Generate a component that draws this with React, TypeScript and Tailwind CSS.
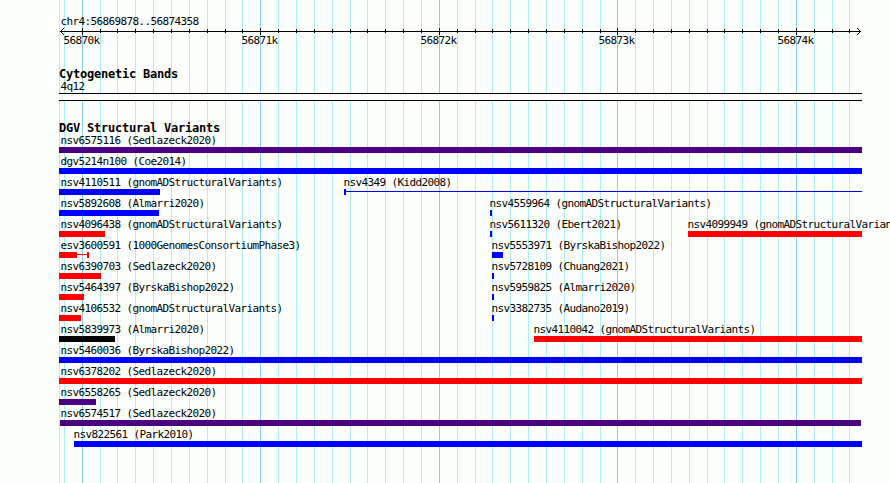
interface Feature {
    name: string;
    start: number;
    end: number;
    color: string;
    labelX: number;
    shape?: "leftCap" | "rightCap";
}

const BLUE = "bg-[#0000ff]";
const RED = "bg-[#ff0000]";
const PURPLE = "bg-[#4b0082]";
const BLACK = "bg-black";

const gridLines = [
    59, 64, 82, 100, 117, 135, 153, 171, 189, 207, 225, 242, 260, 278, 296, 314, 332, 350, 367, 385,
    403, 421, 439, 457, 475, 492, 510, 528, 546, 564, 582, 600, 617, 635, 653, 671, 689, 707, 724,
    742, 760, 778, 796, 814, 832, 849,
];

const majorTicks = [
    { x: 82, label: "56870k" },
    { x: 260, label: "56871k" },
    { x: 439, label: "56872k" },
    { x: 617, label: "56873k" },
    { x: 796, label: "56874k" },
];

const isMajor = (x: number) => majorTicks.some((t) => t.x === x);

const rows: Feature[][] = [
    [{ name: "nsv6575116 (Sedlazeck2020)", start: 59, end: 862, color: PURPLE, labelX: 60 }],
    [{ name: "dgv5214n100 (Coe2014)", start: 59, end: 862, color: BLUE, labelX: 60 }],
    [
        { name: "nsv4110511 (gnomADStructuralVariants)", start: 59, end: 160, color: BLUE, labelX: 60 },
        { name: "nsv4349 (Kidd2008)", start: 344, end: 862, color: BLUE, labelX: 343, shape: "leftCap" },
    ],
    [
        { name: "nsv5892608 (Almarri2020)", start: 59, end: 159, color: BLUE, labelX: 60 },
        { name: "nsv4559964 (gnomADStructuralVariants)", start: 490, end: 492, color: BLUE, labelX: 489 },
    ],
    [
        { name: "nsv4096438 (gnomADStructuralVariants)", start: 59, end: 105, color: RED, labelX: 60 },
        { name: "nsv5611320 (Ebert2021)", start: 490, end: 492, color: BLUE, labelX: 489 },
        { name: "nsv4099949 (gnomADStructuralVariants)", start: 688, end: 862, color: RED, labelX: 687 },
    ],
    [
        { name: "esv3600591 (1000GenomesConsortiumPhase3)", start: 59, end: 89, color: RED, labelX: 60, shape: "rightCap" },
        { name: "nsv5553971 (ByrskaBishop2022)", start: 492, end: 503, color: BLUE, labelX: 491 },
    ],
    [
        { name: "nsv6390703 (Sedlazeck2020)", start: 59, end: 101, color: RED, labelX: 60 },
        { name: "nsv5728109 (Chuang2021)", start: 492, end: 494, color: BLUE, labelX: 491 },
    ],
    [
        { name: "nsv5464397 (ByrskaBishop2022)", start: 59, end: 84, color: RED, labelX: 60 },
        { name: "nsv5959825 (Almarri2020)", start: 492, end: 494, color: BLUE, labelX: 491 },
    ],
    [
        { name: "nsv4106532 (gnomADStructuralVariants)", start: 59, end: 81, color: RED, labelX: 60 },
        { name: "nsv3382735 (Audano2019)", start: 492, end: 494, color: BLUE, labelX: 491 },
    ],
    [
        { name: "nsv5839973 (Almarri2020)", start: 59, end: 115, color: BLACK, labelX: 60 },
        { name: "nsv4110042 (gnomADStructuralVariants)", start: 534, end: 862, color: RED, labelX: 533 },
    ],
    [{ name: "nsv5460036 (ByrskaBishop2022)", start: 59, end: 862, color: BLUE, labelX: 60 }],
    [{ name: "nsv6378202 (Sedlazeck2020)", start: 59, end: 862, color: RED, labelX: 60 }],
    [{ name: "nsv6558265 (Sedlazeck2020)", start: 59, end: 96, color: PURPLE, labelX: 60 }],
    [{ name: "nsv6574517 (Sedlazeck2020)", start: 60, end: 861, color: PURPLE, labelX: 60 }],
    [{ name: "nsv822561 (Park2010)", start: 74, end: 862, color: BLUE, labelX: 73 }],
];

function GridLines() {
    return (
        <svg className="absolute inset-0" width="890" height="483" shapeRendering="crispEdges">
            {gridLines.map((x) => (
                <rect key={x} x={x} y={0} width={1} height={483} fill={isMajor(x) ? "#87ceeb" : "#afeeee"} />
            ))}
        </svg>
    );
}

function Ruler() {
    return (
        <div>
            <svg className="block overflow-visible" width="890" height="7" shapeRendering="crispEdges">
                <rect x={60} y={4} width={801} height={1} />
                {/* arrow heads */}
                {[1, 2, 3].map((d) => (
                    <g key={d}>
                        <rect x={60 + d} y={4 - d} width={1} height={1} />
                        <rect x={60 + d} y={4 + d} width={1} height={1} />
                        <rect x={860 - d} y={4 - d} width={1} height={1} />
                        <rect x={860 - d} y={4 + d} width={1} height={1} />
                    </g>
                ))}
                {gridLines.slice(2).map((x) =>
                    isMajor(x) ? (
                        <rect key={x} x={x} y={1} width={1} height={7} />
                    ) : (
                        <rect key={x} x={x} y={2} width={1} height={4} />
                    )
                )}
            </svg>
            <div className="grid h-[13px]">
                {majorTicks.map((t) => (
                    <Label key={t.label} text={t.label} x={t.x - 19} />
                ))}
            </div>
        </div>
    );
}

function Label({ text, x }: { text: string; x: number }) {
    return (
        <span
            className="col-start-1 row-start-1 block h-[13px] w-0 whitespace-nowrap pl-[0.4px] text-[11px] leading-[13px] tracking-[-0.6226px]"
            style={{ marginLeft: x }}
        >
            {text}
        </span>
    );
}

function Title({ text }: { text: string }) {
    return (
        <h2 className="ml-[59px] h-[13px] whitespace-nowrap text-[12px] font-bold leading-[15px] tracking-[-0.2246px]">
            {text}
        </h2>
    );
}

function Bar({ feature }: { feature: Feature }) {
    const { start, end, color, shape } = feature;
    return (
        <div
            className="col-start-1 row-start-1 flex h-1.5 items-start"
            style={{ marginLeft: start, width: end - start }}
        >
            {shape === "leftCap" && <div className={`h-1.5 w-0.5 ${color}`} />}
            {shape === "rightCap" && <div className={`h-1.5 w-[18px] ${color}`} />}
            {shape ? <div className={`mt-0.5 h-px flex-1 ${color}`} /> : <div className={`h-1.5 flex-1 ${color}`} />}
            {shape === "rightCap" && <div className={`h-1.5 w-0.5 ${color}`} />}
        </div>
    );
}

export default function App() {
    return (
        <div className="relative h-[483px] w-[890px] overflow-hidden bg-[#fdfffc] font-['DejaVu_Sans_Mono',monospace] text-black">
            <GridLines />
            <div className="relative flex flex-col pt-[15px]">
                <div className="grid h-3">
                    <Label text="chr4:56869878..56874358" x={60} />
                </div>
                <Ruler />

                <section className="mt-5">
                    <Title text="Cytogenetic Bands" />
                    <div className="grid">
                        <Label text="4q12" x={60} />
                    </div>
                    <div className="ml-[59px] h-2 w-[803px] border-y border-black bg-[#fdfffc]" />
                </section>

                <section className="mt-5">
                    <Title text="DGV Structural Variants" />
                    <div className="flex flex-col gap-0.5">
                        {rows.map((row, i) => (
                            <div key={i}>
                                <div className="grid h-[13px] grid-cols-1">
                                    {row.map((f) => (
                                        <Label key={f.name} text={f.name} x={f.labelX} />
                                    ))}
                                </div>
                                <div className="grid grid-cols-1">
                                    {row.map((f) => (
                                        <Bar key={f.name} feature={f} />
                                    ))}
                                </div>
                            </div>
                        ))}
                    </div>
                </section>
            </div>
        </div>
    );
}
